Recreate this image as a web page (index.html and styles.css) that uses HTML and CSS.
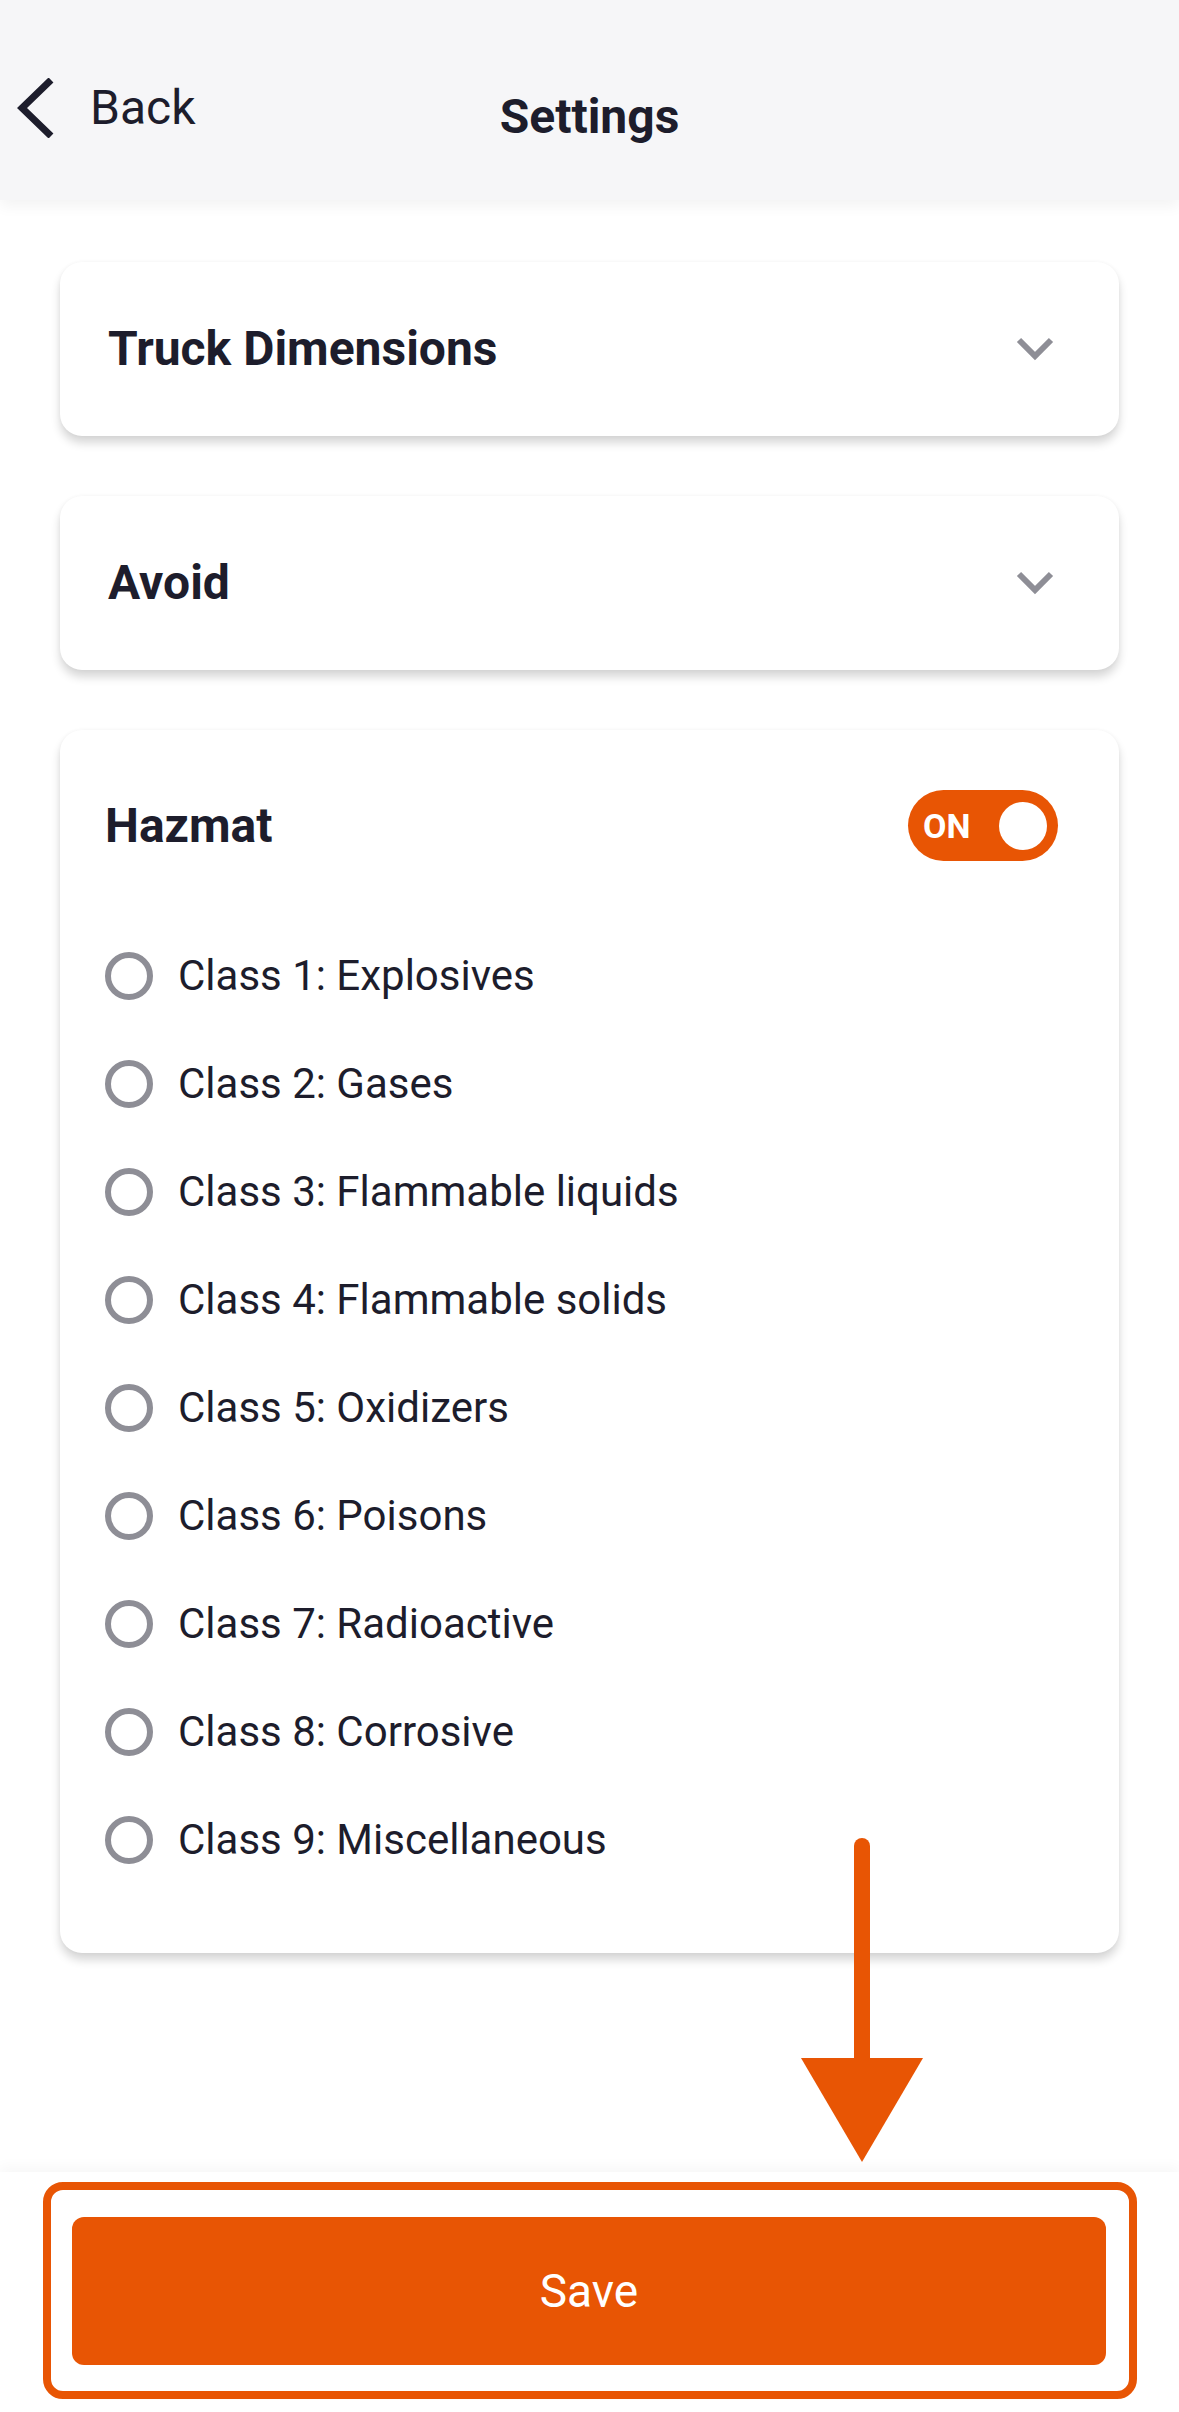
FILE: index.html
```html
<!DOCTYPE html>
<html lang="en">
<head>
<meta charset="utf-8">
<title>Settings</title>
<link rel="stylesheet" href="styles.css">
</head>
<body>
<div class="screen">
  <header class="topbar">
    <div class="back">
      <svg class="back-icon" viewBox="0 0 40 60" width="40" height="60" aria-hidden="true">
        <polyline points="34,2 5,30 34,58" fill="none" stroke="#1d1d2c" stroke-width="7" stroke-linejoin="miter"/>
      </svg>
      <span class="back-label">Back</span>
    </div>
    <h1 class="title">Settings</h1>
    <div></div>
  </header>

  <main class="content">
    <section class="card card-collapsed">
      <h2 class="card-title">Truck Dimensions</h2>
      <svg class="chevron" viewBox="0 0 38 24" width="38" height="24" aria-hidden="true">
        <polyline points="3,3 19,19 35,3" fill="none" stroke="#8e8e96" stroke-width="6"/>
      </svg>
    </section>

    <section class="card card-collapsed">
      <h2 class="card-title">Avoid</h2>
      <svg class="chevron" viewBox="0 0 38 24" width="38" height="24" aria-hidden="true">
        <polyline points="3,3 19,19 35,3" fill="none" stroke="#8e8e96" stroke-width="6"/>
      </svg>
    </section>

    <section class="card card-hazmat">
      <div class="hazmat-head">
        <h2 class="card-title">Hazmat</h2>
        <div class="toggle">
          <span class="toggle-label">ON</span>
          <span class="toggle-knob"></span>
        </div>
      </div>
      <ul class="class-list">
        <li class="class-item"><span class="radio"></span><span class="class-label">Class 1: Explosives</span></li>
        <li class="class-item"><span class="radio"></span><span class="class-label">Class 2: Gases</span></li>
        <li class="class-item"><span class="radio"></span><span class="class-label">Class 3: Flammable liquids</span></li>
        <li class="class-item"><span class="radio"></span><span class="class-label">Class 4: Flammable solids</span></li>
        <li class="class-item"><span class="radio"></span><span class="class-label">Class 5: Oxidizers</span></li>
        <li class="class-item"><span class="radio"></span><span class="class-label">Class 6: Poisons</span></li>
        <li class="class-item"><span class="radio"></span><span class="class-label">Class 7: Radioactive</span></li>
        <li class="class-item"><span class="radio"></span><span class="class-label">Class 8: Corrosive</span></li>
        <li class="class-item"><span class="radio"></span><span class="class-label">Class 9: Miscellaneous</span></li>
      </ul>
    </section>
  </main>

  <footer class="footer">
    <button class="save-btn" type="button">Save</button>
  </footer>

  <div class="highlight-box" aria-hidden="true"></div>
  <svg class="pointer-arrow" viewBox="0 0 134 340" width="134" height="340" aria-hidden="true">
    <line x1="67" y1="16" x2="67" y2="232" stroke="#e85504" stroke-width="16" stroke-linecap="round"/>
    <polygon points="6,228 128,228 67,332" fill="#e85504"/>
  </svg>
</div>
</body>
</html>
```

FILE: styles.css
```css
* {
  box-sizing: border-box;
}

html, body {
  margin: 0;
  padding: 0;
}

body {
  background: #ffffff;
  font-family: Roboto, "Liberation Sans", Arial, sans-serif;
  color: #1d1d2c;
}

.screen {
  position: relative;
  width: 1179px;
  height: 2412px;
  display: flex;
  flex-direction: column;
  overflow: hidden;
  background: #ffffff;
}

/* Header */
.topbar {
  height: 200px;
  flex: none;
  background: #f6f6f8;
  display: grid;
  grid-template-columns: 1fr auto 1fr;
  align-items: center;
  box-shadow: 0 6px 14px rgba(0, 0, 0, 0.05);
  position: relative;
  z-index: 2;
}

.back {
  display: flex;
  align-items: center;
  gap: 33px;
  padding-left: 17px;
  margin-top: 16px;
}

.back-icon {
  display: block;
}

.back-label {
  font-size: 48px;
  font-weight: 400;
  line-height: 1;
  color: #1d1d2c;
}

.title {
  margin: 34px 0 0;
  font-size: 48px;
  font-weight: 700;
  line-height: 1;
  color: #1d1d2c;
}

/* Content */
.content {
  flex: 1;
  padding: 62px 60px 0;
  display: flex;
  flex-direction: column;
  gap: 60px;
}

.card {
  background: #ffffff;
  border-radius: 22px;
  box-shadow: 0 7px 10px rgba(0, 0, 0, 0.16), 0 0 4px rgba(0, 0, 0, 0.04);
}

.card-collapsed {
  height: 174px;
  padding: 0 65px 0 48px;
  display: flex;
  align-items: center;
  justify-content: space-between;
}

.card-title {
  margin: 0;
  font-size: 48px;
  font-weight: 700;
  line-height: 1;
  color: #1d1d2c;
}

.chevron {
  display: block;
}

.card-hazmat {
  padding: 60px 61px 59px 45px;
}

.hazmat-head {
  height: 71px;
  display: flex;
  align-items: center;
  justify-content: space-between;
  margin-bottom: 61px;
}

.toggle {
  width: 150px;
  height: 71px;
  border-radius: 36px;
  background: #e85504;
  display: flex;
  align-items: center;
  justify-content: space-between;
  padding: 0 11px 0 15px;
}

.toggle-label {
  color: #ffffff;
  font-size: 34px;
  font-weight: 700;
  line-height: 1;
}

.toggle-knob {
  width: 48px;
  height: 48px;
  border-radius: 50%;
  background: #ffffff;
}

.class-list {
  list-style: none;
  margin: 0;
  padding: 0;
}

.class-item {
  height: 108px;
  display: flex;
  align-items: center;
  gap: 25px;
}

.radio {
  width: 48px;
  height: 48px;
  border-radius: 50%;
  border: 6px solid #8e8e96;
  flex: none;
}

.class-label {
  font-size: 42px;
  font-weight: 400;
  line-height: 1;
  color: #1d1d2c;
}

/* Footer */
.footer {
  height: 240px;
  flex: none;
  background: #ffffff;
  padding: 45px 73px 0 72px;
  box-shadow: 0 -6px 12px rgba(0, 0, 0, 0.03);
  position: relative;
  z-index: 1;
}

.save-btn {
  display: block;
  width: 100%;
  height: 148px;
  border: none;
  border-radius: 12px;
  background: #e85504;
  color: #ffffff;
  font-family: Roboto, "Liberation Sans", Arial, sans-serif;
  font-size: 46px;
  font-weight: 400;
}

/* Annotations overlaid on the screenshot */
.highlight-box {
  position: absolute;
  left: 43px;
  top: 2182px;
  width: 1094px;
  height: 217px;
  border: 8px solid #e85504;
  border-radius: 20px;
  z-index: 3;
  pointer-events: none;
}

.pointer-arrow {
  position: absolute;
  left: 795px;
  top: 1830px;
  z-index: 3;
  pointer-events: none;
}
```
